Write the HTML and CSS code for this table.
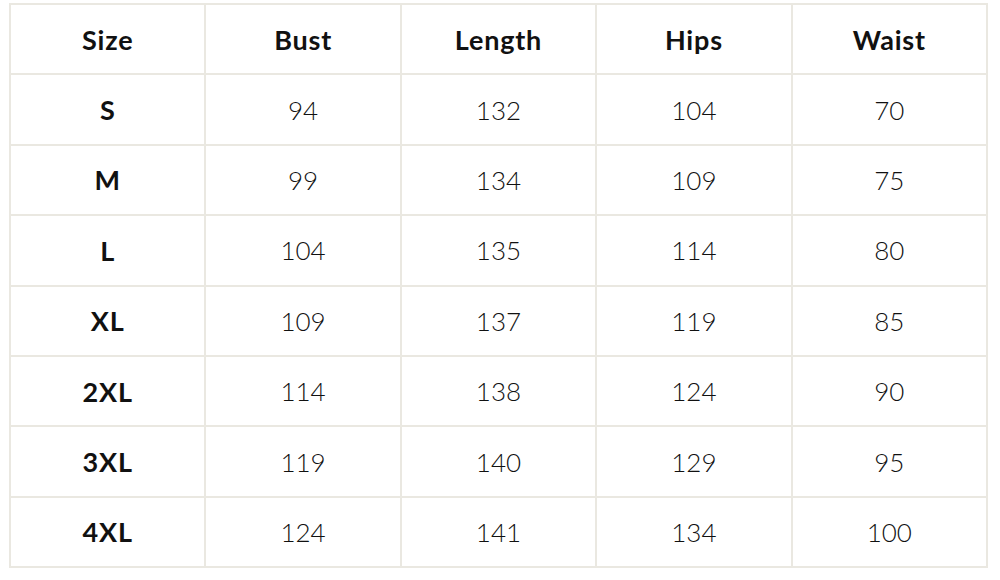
FILE: index.html
```html
<!DOCTYPE html>
<html>
<head>
<meta charset="utf-8">
<link rel="stylesheet" href="styles.css">
</head>
<body>
<table class="size-table">
  <thead>
    <tr><th>Size</th><th>Bust</th><th>Length</th><th>Hips</th><th>Waist</th></tr>
  </thead>
  <tbody>
    <tr><th>S</th><td>94</td><td>132</td><td>104</td><td>70</td></tr>
    <tr><th>M</th><td>99</td><td>134</td><td>109</td><td>75</td></tr>
    <tr><th>L</th><td>104</td><td>135</td><td>114</td><td>80</td></tr>
    <tr><th>XL</th><td>109</td><td>137</td><td>119</td><td>85</td></tr>
    <tr><th>2XL</th><td>114</td><td>138</td><td>124</td><td>90</td></tr>
    <tr><th>3XL</th><td>119</td><td>140</td><td>129</td><td>95</td></tr>
    <tr><th>4XL</th><td>124</td><td>141</td><td>134</td><td>100</td></tr>
  </tbody>
</table>
</body>
</html>
```
FILE: styles.css
```css
html, body {
  margin: 0;
  padding: 0;
  background: #ffffff;
}
body {
  padding: 3px 0 0 9px;
  font-family: "Lato", "Noto Sans", sans-serif;
  color: #111111;
}
.size-table {
  border-collapse: collapse;
  width: 979px;
  table-layout: fixed;
  border: 2px solid #eae8e1;
}
.size-table th,
.size-table td {
  border: 2px solid #eae8e1;
  height: 68.4px;
  padding: 0;
  text-align: center;
  vertical-align: middle;
  font-size: 26px;
  line-height: 1;
}
.size-table th {
  font-weight: 700;
  font-size: 27px;
  letter-spacing: 0.8px;
}
.size-table td {
  font-weight: 300;
}
```
